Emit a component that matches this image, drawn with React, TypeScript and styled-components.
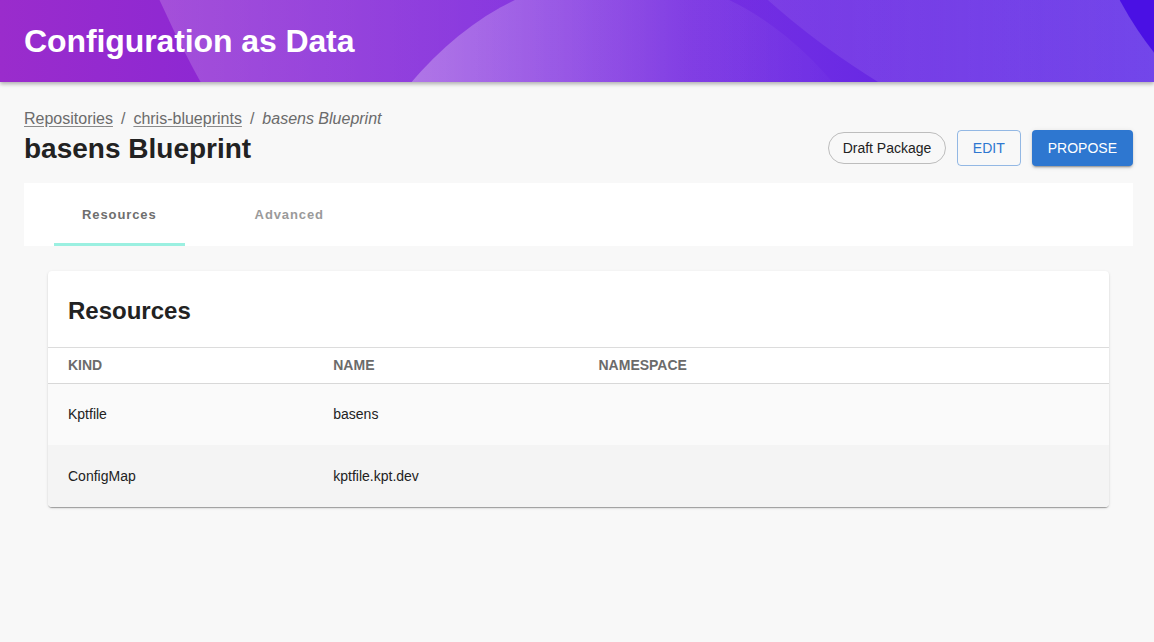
import styled, { createGlobalStyle } from 'styled-components'

const GlobalStyle = createGlobalStyle`
  * {
    box-sizing: border-box;
  }
  body {
    margin: 0;
    background-color: #f8f8f8;
    font-family: 'Liberation Sans', Arial, Helvetica, sans-serif;
    color: #222222;
  }
`

const resources = [
  { kind: 'Kptfile', name: 'basens', namespace: '' },
  { kind: 'ConfigMap', name: 'kptfile.kpt.dev', namespace: '' },
]

const HeaderShapes = () => (
  <ShapeSvg viewBox="0 0 1154 82" preserveAspectRatio="none">
    <defs>
      <linearGradient id="base" x1="0" y1="0" x2="1" y2="0">
        <stop offset="0" stopColor="#9a2ccc" />
        <stop offset="0.45" stopColor="#7a22dc" />
        <stop offset="0.7" stopColor="#6620e2" />
        <stop offset="1" stopColor="#4a10e4" />
      </linearGradient>
      <linearGradient id="leftArc" x1="0" y1="0" x2="1" y2="0">
        <stop offset="0" stopColor="#ffffff" stopOpacity="0.2" />
        <stop offset="0.3" stopColor="#ffffff" stopOpacity="0.06" />
        <stop offset="1" stopColor="#ffffff" stopOpacity="0" />
      </linearGradient>
      <linearGradient id="dome" x1="0" y1="0" x2="1" y2="0">
        <stop offset="0.1" stopColor="#ffffff" stopOpacity="0.32" />
        <stop offset="0.6" stopColor="#ffffff" stopOpacity="0.08" />
        <stop offset="0.9" stopColor="#ffffff" stopOpacity="0" />
      </linearGradient>
      <linearGradient id="rightArc" x1="0" y1="0" x2="1" y2="0">
        <stop offset="0.2" stopColor="#ffffff" stopOpacity="0.08" />
        <stop offset="0.72" stopColor="#ffffff" stopOpacity="0.36" />
      </linearGradient>
    </defs>
    <rect x="0" y="0" width="1154" height="82" fill="url(#base)" />
    <circle cx="1100" cy="-420" r="1030" fill="url(#leftArc)" />
    <circle cx="1300" cy="-600" r="802" fill="url(#rightArc)" />
    <circle cx="1422" cy="-160" r="342" fill="#4a10e4" />
    <ellipse cx="622" cy="400" rx="317" ry="425" fill="url(#dome)" />
  </ShapeSvg>
)

export default function App() {
  return (
    <>
      <GlobalStyle />
      <Page>
        <Header>
          <HeaderShapes />
          <HeaderTitle>Configuration as Data</HeaderTitle>
        </Header>
        <Content>
          <TitleRow>
            <div>
              <Breadcrumbs>
                <Crumb>Repositories</Crumb>
                <Sep>/</Sep>
                <Crumb>chris-blueprints</Crumb>
                <Sep>/</Sep>
                <CurrentCrumb>basens Blueprint</CurrentCrumb>
              </Breadcrumbs>
              <PageTitle>basens Blueprint</PageTitle>
            </div>
            <Actions>
              <Chip>Draft Package</Chip>
              <OutlinedButton>EDIT</OutlinedButton>
              <ContainedButton>PROPOSE</ContainedButton>
            </Actions>
          </TitleRow>
          <TabBar>
            <Tab $active>Resources</Tab>
            <Tab>Advanced</Tab>
          </TabBar>
          <CardWrap>
            <Card>
              <CardTitle>Resources</CardTitle>
              <Table>
                <thead>
                  <tr>
                    <Th>Kind</Th>
                    <Th>Name</Th>
                    <Th>Namespace</Th>
                    <Th />
                  </tr>
                </thead>
                <tbody>
                  {resources.map((r, i) => (
                    <Row key={r.name} $odd={i % 2 === 1}>
                      <Td>{r.kind}</Td>
                      <Td>{r.name}</Td>
                      <Td>{r.namespace}</Td>
                      <Td />
                    </Row>
                  ))}
                </tbody>
              </Table>
            </Card>
          </CardWrap>
        </Content>
      </Page>
    </>
  )
}

const Page = styled.div`
  display: flex;
  flex-direction: column;
  min-height: 642px;
  background-color: #f8f8f8;
`

const Header = styled.header`
  position: relative;
  display: flex;
  align-items: center;
  height: 82px;
  padding: 0 24px;
  overflow: hidden;
  box-shadow: 0 2px 4px rgba(0, 0, 0, 0.3);
  z-index: 1;
`

const ShapeSvg = styled.svg`
  position: absolute;
  top: 0;
  left: 0;
  width: 100%;
  height: 100%;
`

const HeaderTitle = styled.h1`
  position: relative;
  margin: 0;
  color: #ffffff;
  font-size: 32px;
  font-weight: 700;
  letter-spacing: -0.1px;
`

const Content = styled.main`
  display: flex;
  flex-direction: column;
  padding: 27px 21px 0 24px;
`

const TitleRow = styled.div`
  display: flex;
  justify-content: space-between;
  align-items: flex-end;
  margin-bottom: 16px;
`

const Breadcrumbs = styled.div`
  display: flex;
  align-items: center;
  gap: 8px;
  font-size: 16px;
  color: #6b6b6b;
  line-height: 20px;
`

const Crumb = styled.span`
  text-decoration: underline;
  text-underline-offset: 2px;
  text-decoration-color: #8a8a8a;
`

const Sep = styled.span`
  color: #6b6b6b;
`

const CurrentCrumb = styled.span`
  font-style: italic;
`

const PageTitle = styled.h2`
  margin: 2px 0 0 0;
  font-size: 28px;
  line-height: 36px;
  font-weight: 700;
  color: #222222;
`

const Actions = styled.div`
  display: flex;
  align-items: center;
  gap: 11px;
  margin-bottom: 1px;
`

const Chip = styled.span`
  display: inline-flex;
  align-items: center;
  height: 32px;
  padding: 0 13.5px;
  border: 1px solid #bdbdbd;
  border-radius: 16px;
  font-size: 14px;
  color: #222222;
`

const OutlinedButton = styled.button`
  height: 36px;
  padding: 0 15px;
  border: 1px solid rgba(46, 119, 208, 0.5);
  border-radius: 4px;
  background: transparent;
  color: #2e77d0;
  font-family: inherit;
  font-size: 14px;
  font-weight: 500;
`

const ContainedButton = styled.button`
  height: 36px;
  padding: 0 16px;
  border: none;
  border-radius: 4px;
  background-color: #2e77d0;
  color: #ffffff;
  font-family: inherit;
  font-size: 14px;
  font-weight: 500;
  box-shadow: 0 3px 1px -2px rgba(0, 0, 0, 0.2), 0 2px 2px rgba(0, 0, 0, 0.14), 0 1px 5px rgba(0, 0, 0, 0.12);
`

const TabBar = styled.nav`
  display: flex;
  align-items: stretch;
  gap: 42px;
  height: 63px;
  padding-left: 30px;
  background-color: #ffffff;
`

const Tab = styled.div<{ $active?: boolean }>`
  display: flex;
  align-items: center;
  justify-content: center;
  padding: 3px 28px 0 28px;
  font-size: 13px;
  font-weight: 700;
  letter-spacing: 0.9px;
  color: ${(p) => (p.$active ? '#6e6e6e' : '#9a9a9a')};
  border-bottom: 3px solid ${(p) => (p.$active ? '#9bf0e1' : 'transparent')};
`

const CardWrap = styled.div`
  padding: 25px 24px 0 24px;
`

const Card = styled.section`
  background-color: #ffffff;
  border-radius: 4px;
  overflow: hidden;
  box-shadow: 0 2px 1px -1px rgba(0, 0, 0, 0.2), 0 1px 1px rgba(0, 0, 0, 0.14), 0 1px 3px rgba(0, 0, 0, 0.12);
`

const CardTitle = styled.h3`
  margin: 0;
  padding: 26px 20px 22px 20px;
  font-size: 24px;
  line-height: 28px;
  font-weight: 700;
  color: #222222;
  border-bottom: 1px solid #dcdcdc;
`

const Table = styled.table`
  width: 100%;
  border-collapse: collapse;
  table-layout: fixed;
`

const Th = styled.th`
  height: 35px;
  padding: 0 20px;
  text-align: left;
  font-size: 14px;
  font-weight: 700;
  text-transform: uppercase;
  color: #6b6b6b;
  border-bottom: 1px solid #d8d8d8;
`

const Row = styled.tr<{ $odd?: boolean }>`
  background-color: ${(p) => (p.$odd ? '#f4f4f4' : '#fafafa')};
`

const Td = styled.td`
  height: 62px;
  padding: 0 20px;
  font-size: 14px;
  color: #222222;
`
